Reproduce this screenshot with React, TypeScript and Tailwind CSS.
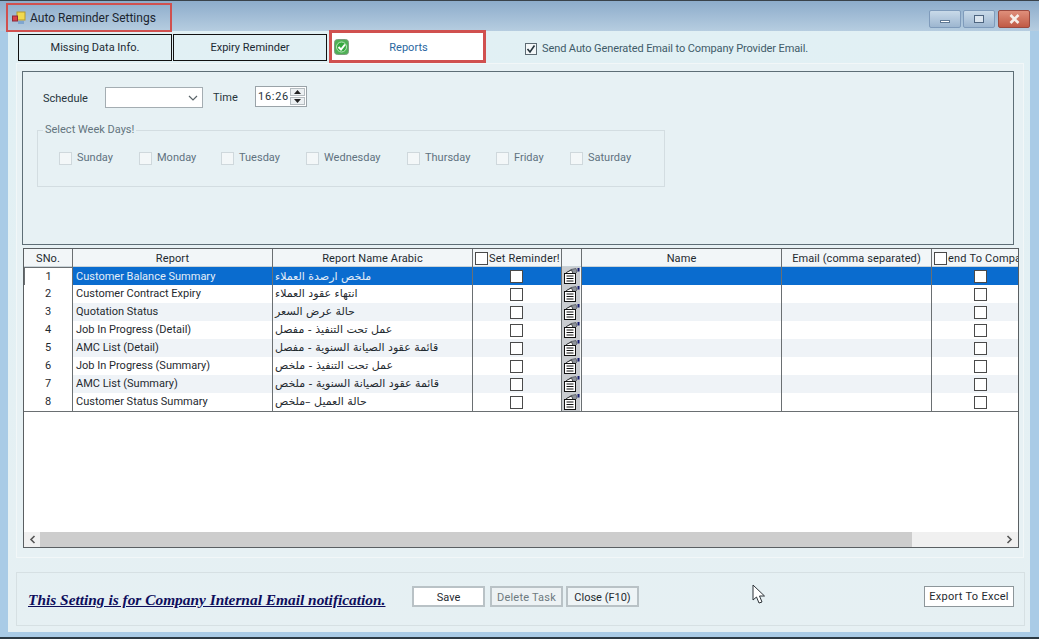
import React from "react";

const reports: [string, string][] = [
  ["Customer Balance Summary", "ملخص ارصدة العملاء"],
  ["Customer Contract Expiry", "انتهاء عقود العملاء"],
  ["Quotation Status", "حالة عرض السعر"],
  ["Job In Progress (Detail)", "عمل تحت التنفيذ - مفصل"],
  ["AMC List (Detail)", "قائمة عقود الصيانة السنوية - مفصل"],
  ["Job In Progress (Summary)", "عمل تحت التنفيذ - ملخص"],
  ["AMC List (Summary)", "قائمة عقود الصيانة السنوية - ملخص"],
  ["Customer Status Summary", "حالة العميل –ملخص"],
];

const days = [
  ["Sunday", "w-[80px]"],
  ["Monday", "w-[82px]"],
  ["Tuesday", "w-[85px]"],
  ["Wednesday", "w-[101px]"],
  ["Thursday", "w-[89px]"],
  ["Friday", "w-[74px]"],
  ["Saturday", "w-[80px]"],
];

const cols = "grid grid-cols-[49px_200px_200px_89px_20px_200px_150px_86px]";

function NoteIcon() {
  return (
    <svg width="18" height="18" viewBox="0 0 18 18" className="block">
      <rect width="18" height="18" fill="#c9ccd0" />
      <path d="M4 6 L9 2.5 L14 1.5 L15 5 L13 7 Z" fill="#8e939a" stroke="#4a4f58" strokeWidth="0.7" />
      <rect x="15.5" y="1" width="2" height="3.5" fill="#141a6e" />
      <path d="M4.5 5.5 L9.5 3 L11 6.5 H4.5 Z" fill="#fff" stroke="#111" strokeWidth="0.7" />
      <rect x="2.5" y="6.5" width="11" height="10" fill="#fff" stroke="#111" strokeWidth="1" />
      <path d="M4.5 9 H11.5 M4.5 11.5 H11.5 M4.5 14 H11.5" stroke="#111" strokeWidth="1" />
    </svg>
  );
}

function Box() {
  return <span className="block shrink-0 w-[13px] h-[13px] border border-[#4a4a4a] bg-white" />;
}

export default function App() {
  return (
    <div
      className="w-[1039px] h-[639px] overflow-hidden flex flex-col bg-[#a9cbe6] text-[#1c2a33] border-t border-[#39424a] relative"
      style={{ fontFamily: 'Roboto, "DejaVu Sans", sans-serif', fontSize: 11 }}
    >
      {/* Title bar */}
      <div className="h-[30px] shrink-0 flex items-start bg-gradient-to-b from-[#8daccb] to-[#b6cde0] pl-[6px] pr-[9px]">
        <div className="relative z-10 mt-[2px] w-[166px] h-[29px] border-2 border-[#d0504f] flex items-center pl-[4px] gap-[4px]">
          <svg width="14" height="14" viewBox="0 0 14 14">
            <rect x="5" y="1" width="8" height="8" fill="#f1d94e" stroke="#b69a2a" />
            <rect x="0.5" y="5" width="5" height="5" fill="#d8424a" stroke="#8f2a3a" />
            <rect x="6" y="10" width="6" height="3" fill="#7fa6d0" />
          </svg>
          <span className="text-[12px] text-[#1b2530] pt-[1px]">Auto Reminder Settings</span>
        </div>
        <div className="ml-auto mt-[9px] flex gap-[2px]">
          <div className="w-[32px] h-[18px] rounded-[2px] border border-[#7f9bbb] bg-gradient-to-b from-[#c9dae9] to-[#9db6d0] flex items-center justify-center">
            <span className="block w-[10px] h-[3px] mt-[4px] bg-white border border-[#5f7894]" />
          </div>
          <div className="w-[32px] h-[18px] rounded-[2px] border border-[#7f9bbb] bg-gradient-to-b from-[#c9dae9] to-[#9db6d0] flex items-center justify-center">
            <span className="block w-[10px] h-[8px] bg-[#dbe5ef] border border-[#4e6580]" />
          </div>
          <div className="ml-[1px] w-[32px] h-[18px] rounded-[2px] border border-[#9a4a40] bg-gradient-to-b from-[#df8f7b] to-[#c05a45] flex items-center justify-center">
            <svg width="11" height="10" viewBox="0 0 11 10">
              <path d="M1.5 1 L9.5 9 M9.5 1 L1.5 9" stroke="#f6efe9" strokeWidth="2.6" />
            </svg>
          </div>
        </div>
      </div>

      {/* Window body */}
      <div className="ml-[8px] mr-[9px] h-[601px] shrink-0 bg-gradient-to-b from-[#e1f0f4] to-[#e6f0f3]">
        {/* Tabs */}
        <div className="flex items-start h-[29px] pl-[10px] pt-[3px]">
          <div className="w-[154px] h-[27px] border border-[#111] flex items-center justify-center pt-[2px]">Missing Data Info.</div>
          <div className="ml-[1px] w-[154px] h-[27px] border border-[#111] flex items-center justify-center pt-[2px]">Expiry Reminder</div>
          <div className="relative z-10 ml-[2px] -mt-[4px] w-[157px] h-[33px] bg-white border-[3px] border-[#d0504f] flex items-center">
            <svg width="15" height="16" viewBox="0 0 15 16" className="ml-[2px] shrink-0">
              <rect x="0.5" y="0.5" width="14" height="15" rx="3" fill="#4fb055" stroke="#7d9d80" />
              <circle cx="7.5" cy="8" r="5" fill="#35a83f" stroke="#b7e6b9" />
              <path d="M4.5 8 L7 10.5 L11 5.5" fill="none" stroke="#fff" strokeWidth="2" />
            </svg>
            <span className="flex-1 text-center text-[#2a679f] pr-[15px] pt-[3px]">Reports</span>
          </div>
          <div className="ml-[39px] mt-[6px] flex items-center gap-[5px] text-[#3f5b69] tracking-[-0.1px]">
            <span className="w-[12px] h-[12px] border border-[#5c6a72] bg-[#f3f7f8] flex items-center justify-center">
              <svg width="10" height="10" viewBox="0 0 10 10">
                <path d="M1.5 5 L4 8 L8.5 1.5" fill="none" stroke="#26343c" strokeWidth="1.6" />
              </svg>
            </span>
            <span className="pt-[1px]">Send Auto Generated Email to Company Provider Email.</span>
          </div>
        </div>

        {/* Tab page */}
        <div className="mt-[3px] ml-[8px] w-[1008px] h-[495px] border border-[#f2f7f8] bg-[#e7f1f4] pt-[7px] pl-[5px]">
          {/* Schedule panel */}
          <div className="w-[992px] h-[174px] border border-[#5e6e76] pl-[20px] pt-[15px] text-[#26343c]">
            <div className="flex items-center h-[21px]">
              <span className="w-[62px] pt-[3px]">Schedule</span>
              <div className="w-[98px] h-[21px] bg-white border border-[#a4adb2] flex items-center justify-end pr-[4px]">
                <svg width="10" height="6" viewBox="0 0 10 6">
                  <path d="M1 1 L5 5 L9 1" fill="none" stroke="#5a6469" strokeWidth="1.2" />
                </svg>
              </div>
              <span className="ml-[10px] w-[42px] pt-[1px]">Time</span>
              <div className="-mt-[2px] w-[52px] h-[21px] bg-white border border-[#9aa3a8] flex items-center pl-[2px] justify-between pr-[1px] tracking-[0.7px]">
                <span className="pt-[1px]">16:26</span>
                <span className="flex flex-col gap-[1px]">
                  <span className="w-[15px] h-[8px] bg-[#ecf0f2] border border-[#b5bcc0] flex items-center justify-center">
                    <svg width="7" height="4" viewBox="0 0 7 4"><path d="M3.5 0 L7 4 H0 Z" fill="#222" /></svg>
                  </span>
                  <span className="w-[15px] h-[8px] bg-[#ecf0f2] border border-[#b5bcc0] flex items-center justify-center">
                    <svg width="7" height="4" viewBox="0 0 7 4"><path d="M0 0 H7 L3.5 4 Z" fill="#222" /></svg>
                  </span>
                </span>
              </div>
            </div>
            {/* Week days */}
            <div className="relative mt-[22px] -ml-[6px] w-[628px] h-[57px] border border-[#d3dde1] flex items-center pl-[21px] pb-[1px]">
              <span className="absolute left-[5px] -top-[8px] px-[2px] bg-[#e7f1f4] text-[#64757e] leading-[14px]">Select Week Days!</span>
              {days.map(([d, w]) => (
                <div key={d} className={`${w} flex items-center gap-[5px] text-[#5f7280] shrink-0`}>
                  <span className="w-[13px] h-[13px] bg-[#f3f7f8] border border-[#cfd8dc] shrink-0" />
                  <span className="pt-[1px]">{d}</span>
                </div>
              ))}
            </div>
          </div>

          {/* Grid */}
          <div className="mt-[3px] ml-[1px] w-[996px] h-[300px] border border-[#5a5f62] bg-white flex flex-col overflow-hidden text-[#1f2a30]">
            <div className={`${cols} h-[18px] shrink-0 bg-[#f2f6f8] border-b border-[#c9d3d8] tracking-[0.1px]`}>
              <div className="border-r border-[#6a6f72] flex items-center justify-center pt-[2px]">SNo.</div>
              <div className="border-r border-[#6a6f72] flex items-center justify-center pt-[2px]">Report</div>
              <div className="border-r border-[#6a6f72] flex items-center justify-center pt-[2px]">Report Name Arabic</div>
              <div className="border-r border-[#6a6f72] flex items-center pl-[2px] gap-[1px] whitespace-nowrap">
                <Box />
                <span className="tracking-[0.2px] pt-[2px]">Set Reminder!</span>
              </div>
              <div className="border-r border-[#6a6f72]" />
              <div className="border-r border-[#6a6f72] flex items-center justify-center pt-[2px]">Name</div>
              <div className="border-r border-[#6a6f72] flex items-center justify-center pt-[2px]">Email (comma separated)</div>
              <div className="flex items-center pl-[2px] gap-[1px] overflow-hidden whitespace-nowrap">
                <Box />
                <span className="tracking-[0.2px] pt-[2px]">end To Company</span>
              </div>
            </div>
            {reports.map(([name, arabic], i) => {
              const selected = i === 0;
              const rowBg = selected ? "bg-[#0a6ccf] text-[#e4eef8]" : i % 2 === 1 ? "bg-white" : "bg-[#eff3f7]";
              return (
                <div key={name} className={`${cols} h-[18px] shrink-0 ${rowBg}`}>
                  <div className={`border-r border-[#6a6f72] flex items-center justify-center pt-[1px] ${selected ? "bg-white text-[#1f2a30] border border-[#0a6ccf]" : "bg-white"} `}>{i + 1}</div>
                  <div className="border-r border-[#6a6f72] flex items-center pl-[3px] pt-[1px] whitespace-nowrap">{name}</div>
                  <div dir="rtl" className="border-r border-[#6a6f72] flex items-center justify-end pl-[2px] text-[11px]" style={{ fontFamily: '"DejaVu Sans", sans-serif' }}>{arabic}</div>
                  <div className="border-r border-[#6a6f72] flex items-center justify-center pr-[1px]">
                    <Box />
                  </div>
                  <div className="border-r border-[#6a6f72] bg-[#f4f6f7]"><NoteIcon /></div>
                  <div className="border-r border-[#6a6f72]" />
                  <div className="border-r border-[#6a6f72]" />
                  <div className="flex items-center justify-center pl-[10px]">
                    <Box />
                  </div>
                </div>
              );
            })}
            <div className="flex-1 border-t border-[#6a6f72]" />
            {/* Scrollbar */}
            <div className="h-[15px] shrink-0 flex items-center bg-[#f0f0f0]">
              <div className="w-[16px] flex items-center justify-center">
                <svg width="7" height="9" viewBox="0 0 7 9"><path d="M5.5 1 L2 4.5 L5.5 8" fill="none" stroke="#555" strokeWidth="1.6" /></svg>
              </div>
              <div className="w-[872px] h-full bg-[#cdcdcd]" />
              <div className="ml-auto w-[17px] flex items-center justify-center">
                <svg width="7" height="9" viewBox="0 0 7 9"><path d="M1.5 1 L5 4.5 L1.5 8" fill="none" stroke="#555" strokeWidth="1.6" /></svg>
              </div>
            </div>
          </div>
        </div>

        {/* Footer */}
        <div className="mt-[14px] ml-[8px] w-[1009px] h-[54px] border border-[#d6e0e3] flex items-center pl-[11px] pr-[10px]">
          <span className="w-[384px] text-[15.4px] font-bold italic underline text-[#0e0e5c] mt-[1px] whitespace-nowrap" style={{ fontFamily: '"Liberation Serif", serif' }}>
            This Setting is for Company Internal Email notification.
          </span>
          <div className="flex items-center -mt-[6px]">
            <button className="w-[73px] h-[21px] bg-white border-2 border-[#b9c2c6] text-[#1f2a30] pt-[2px]">Save</button>
            <button className="ml-[5px] w-[73px] h-[21px] bg-[#edf2f4] border-2 border-[#b9c2c6] text-[#6d7a80] tracking-[0.2px] pt-[2px]">Delete Task</button>
            <button className="ml-[3px] w-[73px] h-[21px] bg-[#eef4f6] border-2 border-[#b9c2c6] text-[#1f2a30] pt-[2px]">Close (F10)</button>
          </div>
          <button className="ml-auto -mt-[6px] w-[90px] h-[21px] bg-white border border-[#8d969a] text-[#1f2a30] tracking-[0.3px] pt-[2px]">Export To Excel</button>
        </div>
      </div>

      {/* Bottom frame */}
      <div className="flex-1 border-b-2 border-[#2c3a44]" />

      {/* Mouse pointer */}
      <svg width="14" height="21" viewBox="0 0 14 21" className="absolute left-[752px] top-[583px]">
        <path d="M1 1 L1 16 L4.5 13 L7 19 L10 18 L7.5 12 L12.5 12 Z" fill="#fff" stroke="#2c3338" strokeWidth="1" />
      </svg>
    </div>
  );
}
